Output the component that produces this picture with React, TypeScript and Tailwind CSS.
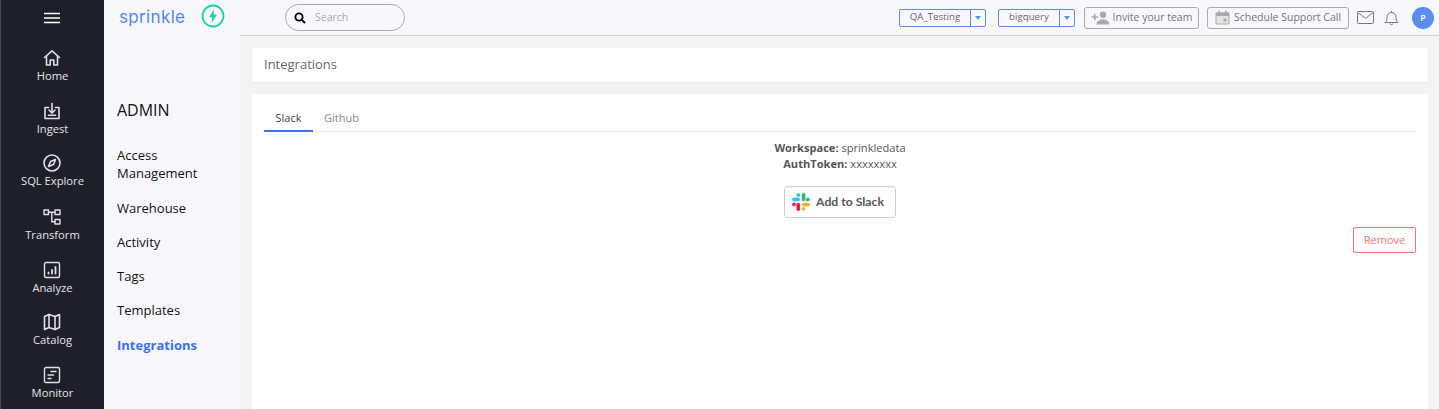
import React from "react";

const Ico = ({ children, size = 18, sw = 1.6 }: { children: React.ReactNode; size?: number; sw?: number }) => (
  <svg width={size} height={size} viewBox="0 0 18 18" fill="none" stroke="#e4dfe6" strokeWidth={sw} strokeLinecap="round" strokeLinejoin="round">
    {children}
  </svg>
);

const nav: [string, React.ReactNode, string][] = [
  ["Home", <Ico key="h"><path d="M1.500 8.500 9 1.800l7.500 6.700" /><path d="M3.500 7.500v8.500h3.700v-5h3.600v5h3.700V7.500" /></Ico>, "h-[53px]"],
  ["Ingest", <Ico key="i"><path d="M5.500 5.500H2v11h14v-11h-3.500" /><path d="M9 1.500v9" /><path d="M6 8l3 3 3-3" /><path d="M5.500 13.200h7" /></Ico>, "h-[52px]"],
  ["SQL Explore", <Ico key="s"><circle cx="9" cy="9" r="8" /><path d="M12.500 5.500l-2 5-5 2 2-5z" /></Ico>, "h-[54px]"],
  ["Transform", <Ico key="t" sw={1.4}><rect x="1" y="2" width="4.500" height="4.500" /><rect x="12" y="2" width="5" height="4.500" /><rect x="12" y="11.500" width="5" height="4.500" /><path d="M5.500 4.200H12M8.800 4.200v9.500H12" /></Ico>, "h-[53px]"],
  ["Analyze", <Ico key="a" sw={1.4}><rect x="1.500" y="1.500" width="15" height="15" rx="1.500" /><path d="M5.500 12.500v-1M9 12.500V9M12.500 12.500V6" strokeWidth="1.800" /></Ico>, "h-[52px]"],
  ["Catalog", <Ico key="c"><path d="M1.500 3.500 6 1.500l6 2 4.500-2v13l-4.500 2-6-2-4.500 2z" /><path d="M6 1.500v13M12 3.500v13" /></Ico>, "h-[53px]"],
  ["Monitor", <Ico key="m" sw={1.4}><rect x="1.500" y="1.500" width="15" height="15" rx="1.500" /><path d="M8 5.500h5M5 9h5.500M5 12.500h3" /></Ico>, "h-[53px]"],
];

const menu = ["Warehouse", "Activity", "Tags", "Templates"];

const Slack = () => (
  <svg width="18" height="18" viewBox="0 0 18 18">
    <rect x="0" y="4.600" width="8" height="3.600" rx="1.800" fill="#36C5F0" />
    <path d="M4.400 1.800a1.800 1.800 0 1 1 3.600 0V3.800H6.200a1.800 1.800 0 0 1-1.800-2z" fill="#36C5F0" />
    <rect x="9.800" y="0" width="3.600" height="8.200" rx="1.800" fill="#2EB67D" />
    <path d="M14.200 6.400a1.800 1.800 0 1 1 1.800 1.800h-1.800z" fill="#2EB67D" />
    <rect x="9.800" y="9.800" width="8.200" height="3.600" rx="1.800" fill="#ECB22E" />
    <path d="M9.800 14.200h1.800a1.800 1.800 0 1 1-1.800 1.800z" fill="#ECB22E" />
    <rect x="4.400" y="9.800" width="3.600" height="8.200" rx="1.800" fill="#E01E5A" />
    <path d="M3.600 9.800v1.800a1.800 1.800 0 1 1-1.800-1.800z" fill="#E01E5A" />
  </svg>
);

const Select = ({ label, w }: { label: string; w: string }) => (
  <div className={`flex h-[18px] items-stretch rounded-[2px] border border-[#5b8def] ${w}`}>
    <div className="flex flex-1 items-center justify-center text-[9.700px] text-[#666]">{label}</div>
    <div className="flex w-[15px] items-center justify-center border-l border-[#5b8def]">
      <div className="h-0 w-0 border-x-[3.500px] border-t-[4px] border-x-transparent border-t-[#5b8def]" />
    </div>
  </div>
);

export default function App() {
  return (
    <div className="flex h-[409px] w-[1439px] overflow-hidden bg-[#f4f4f4] font-['Open_Sans',sans-serif]">
      <aside className="flex w-[104px] shrink-0 flex-col border-l border-[#4a4b50] bg-[#1e2029]">
        <div className="flex h-[36px] shrink-0 items-center justify-center pr-px">
          <svg width="16" height="12" viewBox="0 0 16 12" stroke="#fff" strokeWidth="1.600">
            <path d="M0 1.500h16M0 6h16M0 10.500h16" />
          </svg>
        </div>
        <div className="flex flex-col pt-[12px]">
          {nav.map(([label, icon, h]) => (
            <div key={label} className={`flex shrink-0 flex-col items-center text-[11.200px] leading-[16px] text-[#e6e2e8] ${h}`}>
              <div className="-ml-[1px] flex h-[19px] items-center">{icon}</div>
              <span className="mt-[1px]">{label}</span>
            </div>
          ))}
        </div>
      </aside>

      <nav className="flex w-[136px] shrink-0 flex-col bg-[#f8f8fc] pl-[13px]">
        <div className="flex h-[35px] shrink-0 items-center gap-[16px] pl-[2px]">
          <span className="font-['Inter',sans-serif] text-[17px] leading-none tracking-[0.35px] text-[#4f86f7]">sprinkle</span>
          <svg className="mb-[3px]" width="24" height="24" viewBox="0 0 24 24" fill="none">
            <circle cx="12" cy="12" r="10.500" stroke="#1fd0a3" strokeWidth="1.800" />
            <path d="M13.200 5 8 13.200h3.400L10.600 19l5.400-8.400h-3.400z" fill="#1fd0a3" />
          </svg>
        </div>
        <div className="mt-[64px] text-[16px] leading-[22px] text-[#111]">ADMIN</div>
        <div className="mt-[25px] text-[13px] leading-[18px] text-[#111]">Access<br />Management</div>
        <div className="mt-[17px] flex flex-col gap-[16px] text-[13px] leading-[18px] text-[#111]">
          {menu.map((m) => (
            <div key={m}>{m}</div>
          ))}
          <div className="mt-[1px] font-bold text-[#3a6ff7]">Integrations</div>
        </div>
      </nav>

      <div className="flex min-w-0 flex-1 flex-col">
        <header className="flex h-[36px] shrink-0 items-center border-b border-[#d0d0d0] bg-[#f8f8fc] pr-[5px]">
          <div className="ml-[45px] flex h-[27px] w-[120px] items-center rounded-full border border-[#aaa] pl-[8px]">
            <svg width="12" height="12" viewBox="0 0 12 12" fill="none" stroke="#000" strokeWidth="1.900">
              <circle cx="5" cy="5" r="3.600" />
              <path d="M7.800 7.800 11 11" />
            </svg>
            <span className="ml-[9px] text-[10.500px] text-[#aaa]">Search</span>
          </div>
          <div className="ml-auto flex items-center">
            <Select label="QA_Testing" w="w-[87px]" />
            <div className="w-[12px]" />
            <Select label="bigquery" w="w-[77px]" />
            <button className="ml-[9px] flex h-[22px] w-[115px] items-center justify-center gap-[3px] rounded-[3px] border border-[#aaa] text-[10.500px] text-[#777]">
              <svg width="19" height="14" viewBox="0 0 19 14" fill="#aaa">
                <circle cx="12" cy="3.800" r="3.200" />
                <path d="M5.500 13.500c0-3 3-5 6.500-5s6.500 2 6.500 5z" />
                <path d="M0.500 5.200h2.500V2.700h1.500v2.500H7v1.500H4.500v2.500H3V6.700H.5z" />
              </svg>
              Invite your team
            </button>
            <button className="ml-[8px] flex h-[22px] w-[142px] items-center justify-center gap-[4px] rounded-[3px] border border-[#aaa] text-[10.500px] text-[#777]">
              <svg width="15" height="15" viewBox="0 0 15 15" fill="#aaa">
                <path d="M1 3h13v11H1z" fillOpacity="0.250" stroke="#aaa" strokeWidth="1" />
                <path d="M1 2.500h13V6H1z" />
                <rect x="3.500" y="0.500" width="1.500" height="3" />
                <rect x="10" y="0.500" width="1.500" height="3" />
                <rect x="8.500" y="8.500" width="3" height="3" />
              </svg>
              Schedule Support Call
            </button>
            <svg className="ml-[8px]" width="17" height="13" viewBox="0 0 17 13" fill="none" stroke="#777" strokeWidth="1">
              <rect x="0.500" y="0.500" width="16" height="12" rx="1" />
              <path d="M1 1.500 8.500 7.500 16 1.500" />
            </svg>
            <svg className="ml-[10px]" width="15" height="16" viewBox="0 0 15 16" fill="none" stroke="#777" strokeWidth="1">
              <path d="M1 12.500c1.500-1.500 2-2.500 2-5.500 0-2.500 2-4.500 4.500-4.500S12 4.500 12 7c0 3 .5 4 2 5.500z" />
              <path d="M7.500 2.500V1M6 13.500c.3 1.500 2.700 1.500 3 0" />
            </svg>
            <div className="ml-[13px] flex h-[22px] w-[22px] items-center justify-center rounded-full bg-[#5b8def] text-[9px] font-semibold text-white">P</div>
          </div>
        </header>

        <main className="flex flex-1 flex-col gap-[12px] pl-[12px] pr-[11px] pt-[12px]">
          <div className="flex h-[34px] shrink-0 items-center bg-white pl-[12px] text-[13px] text-[#666] shadow-[0_1px_3px_rgba(0,0,0,0.05)]">Integrations</div>
          <section className="flex flex-1 flex-col bg-white px-[12px] pt-[14px]">
            <div className="flex h-[24px] shrink-0 border-b border-[#e8e8e8] text-[11px]">
              <div className="flex h-[24px] w-[49px] justify-center border-b-2 border-[#3a6ff7] pt-[2px] text-[#444]">Slack</div>
              <div className="flex w-[57px] justify-center pt-[2px] text-[#888]">Github</div>
            </div>
            <div className="mt-[8px] flex flex-col items-center text-[11.100px] leading-[16px] text-[#555]">
              <div><b className="font-bold">Workspace:</b> sprinkledata</div>
              <div><b className="font-bold">AuthToken:</b> xxxxxxxx</div>
              <button className="mt-[14px] flex h-[32px] w-[112px] items-center justify-center gap-[6px] rounded-[4px] border border-[#ccc] pr-[4px] font-['Lato',sans-serif] text-[12.200px] font-bold text-[#555]">
                <Slack />
                Add to Slack
              </button>
            </div>
            <div className="mt-[9px] flex justify-end">
              <button className="h-[26px] w-[63px] rounded-[2px] border border-[#ff6f6f] text-[11px] text-[#ff6f6f]">Remove</button>
            </div>
          </section>
        </main>
      </div>
    </div>
  );
}
